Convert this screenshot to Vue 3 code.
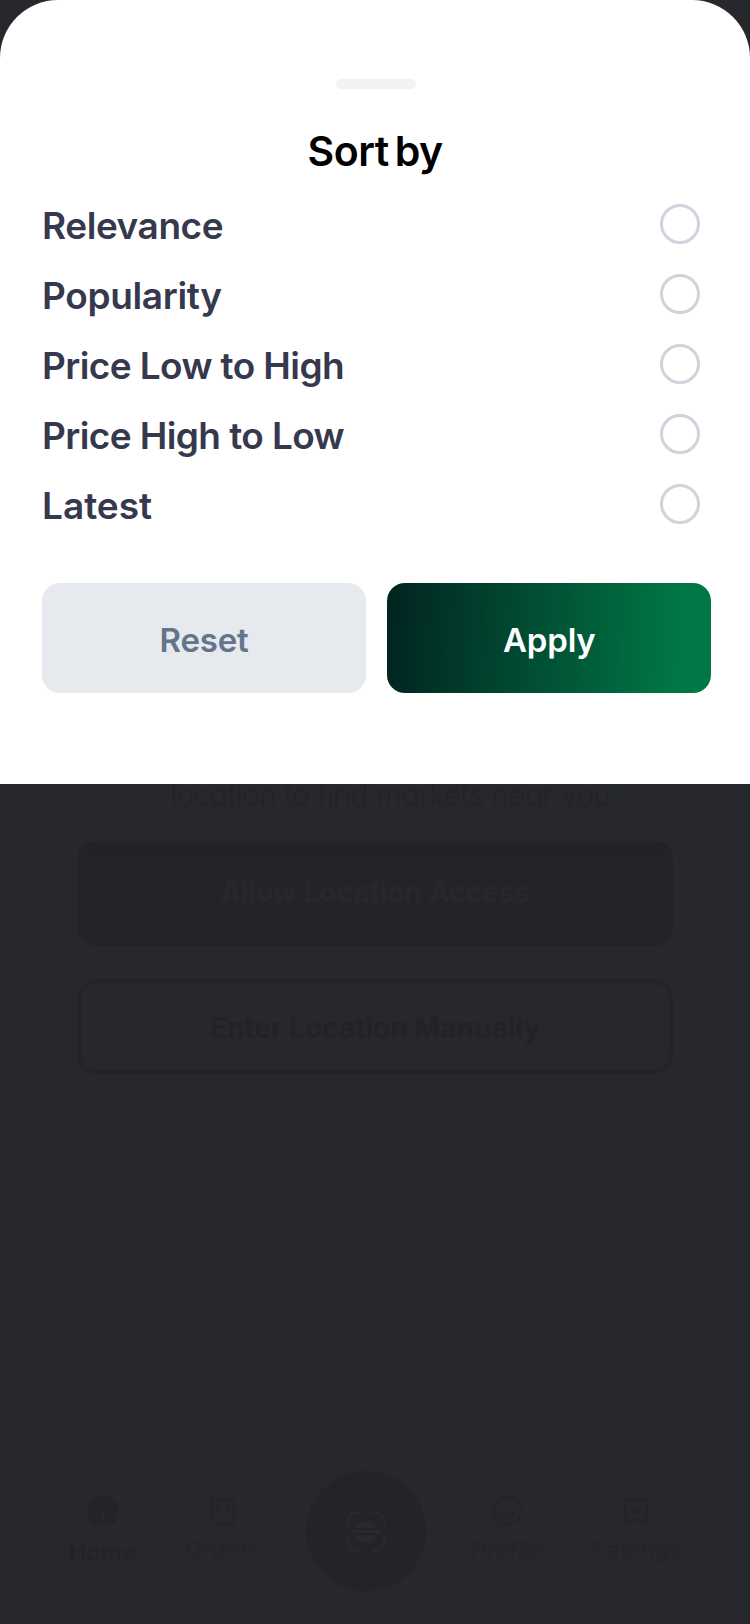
<script setup>
import { ref } from 'vue'

const options = [
  { label: 'Relevance', cls: 'relevance' },
  { label: 'Popularity', cls: 'popularity' },
  { label: 'Price Low to High', cls: 'low-high' },
  { label: 'Price High to Low', cls: 'high-low' },
  { label: 'Latest', cls: 'latest' },
]
const selected = ref(null)
</script>

<template>
  <div class="screen">
    <main class="page">
      <p class="hint">location to find markets near you</p>
      <button class="allow"><span>Allow Location Access</span></button>
      <button class="manual"><span>Enter Location Manually</span></button>
      <nav class="tabs">
        <div class="tab home">
          <svg width="32" height="32" viewBox="0 0 32 32">
            <path d="M13 2.2Q16 0 19 2.2L29.5 10Q32 12 31.5 15L29 27Q28 31 24 31H8Q4 31 3 27L.5 15Q0 12 2.500 10Z" fill="#242329" />
            <path d="M16 20v5" stroke="#292a2e" stroke-width="2.400" stroke-linecap="round" />
          </svg>
          <span>Home</span>
        </div>
        <div class="tab orders">
          <svg width="24" height="27" viewBox="0 0 24 27" fill="none" stroke="#242529" stroke-width="2.500">
            <path d="M1.250 1.250h21.500v24.500H1.250z" />
            <path d="M6 6v2.500a6 6 0 0 0 12 0V6" />
          </svg>
          <span>Orders</span>
        </div>
        <div class="scan">
          <svg width="40" height="41" viewBox="0 0 40 41" fill="none" stroke="#28282d" stroke-width="2.800" stroke-linecap="round">
            <path d="M1.500 15v-3.500a10 10 0 0 1 10-10H15M25 1.500h3.500a10 10 0 0 1 10 10V15M38.500 26v3.500a10 10 0 0 1-10 10H27M15 39.500h-3.500a10 10 0 0 1-10-10V26" />
            <path d="M6.500 20.500h27" />
            <path d="M10 17.200v-1q0-6 6-6h8q6 0 6 6v1zM10 24h20q0 7.200-6 7.200h-8q-6 0-6-7.200z" fill="#28282d" stroke="none" />
          </svg>
        </div>
        <div class="tab profile">
          <svg width="30" height="30" viewBox="0 0 30 30" fill="none" stroke="#242529" stroke-width="2.500">
            <circle cx="15" cy="15" r="13.700" />
            <path d="M8 15a7 7 0 0 0 14 0" stroke-linecap="round" />
          </svg>
          <span>Profile</span>
        </div>
        <div class="tab settings">
          <svg width="24" height="28" viewBox="0 0 24 28">
            <path d="M1.250 1.250h21.500V26L12 21.200 1.250 26z" fill="none" stroke="#242529" stroke-width="2.500" />
            <path d="M12 6l1.800 3.700 4.100.6-3 2.900.7 4.100-3.600-2-3.600 2 .7-4.100-3-2.900 4.100-.6z" fill="#242529" />
          </svg>
          <span>Settings</span>
        </div>
      </nav>
      <div class="indicator"></div>
    </main>

    <section class="sheet">
      <div class="handle"></div>
      <h1><span>Sort by</span></h1>
      <div class="options">
        <label v-for="o in options" :key="o.label" class="option" @click="selected = o.label">
          <span class="label" :class="o.cls">{{ o.label }}</span>
          <span class="radio"></span>
        </label>
      </div>
      <div class="actions">
        <button class="reset"><span>Reset</span></button>
        <button class="apply"><span>Apply</span></button>
      </div>
    </section>
  </div>
</template>

<style>
body { margin: 0; background: #27282c; }
</style>

<style scoped>
.screen {
  position: relative;
  width: 750px;
  height: 1624px;
  overflow: hidden;
  background: #27282c;
  font-family: Inter, "Liberation Sans", sans-serif;
}
* { box-sizing: border-box; }
button { font-family: inherit; border: 0; padding: 0; display: flex; justify-content: center; align-items: center; }

.sheet {
  position: absolute;
  top: 0;
  left: 0;
  width: 750px;
  height: 784px;
  padding: 79px 38px 0 42px;
  background: #fff;
  border-radius: 58px 58px 0 0;
}
.handle { width: 80px; height: 10px; margin-left: 294px; border-radius: 5px; background: #f2f2f2; }
h1 {
  margin: 35px 0 0;
  height: 54px;
  line-height: 54px;
  padding-left: 265.500px;
  font-size: 41px;
  font-weight: 600;
  letter-spacing: -.450px;
  word-spacing: -4px;
  color: #000;
  white-space: nowrap;
}
.options { margin-top: 11px; display: flex; flex-direction: column; }
.option { height: 70px; display: flex; justify-content: space-between; align-items: center; padding-right: 12px; }
.label { font-size: 37px; line-height: 46px; font-weight: 600; color: #36394d; letter-spacing: -.6px; padding-top: 4px; white-space: nowrap; }
.relevance { letter-spacing: -.45px; }
.popularity { letter-spacing: -.35px; }
.latest { letter-spacing: 0; }
.radio { width: 40px; height: 40px; border: 3px solid #d0d3db; border-radius: 50%; }
.actions { margin-top: 44px; display: flex; gap: 21.300px; }
.actions button { width: 324px; height: 110px; border-radius: 18px; font-size: 33px; font-weight: 600; letter-spacing: -.2px; padding-top: 4px; }
.reset { background: #e6e9ee; color: #64748b; }
.apply { background: linear-gradient(92deg, #012622 2%, #007745 90%); color: #fff; }

.page { height: 1624px; padding: 775px 0 0 77px; display: flex; flex-direction: column; border-bottom: 1px solid #25232a; }
.hint {
  margin: 0 0 0 93px;
  height: 40px;
  line-height: 40px;
  font-size: 30px;
  font-weight: 300;
  font-feature-settings: "cv11";
  letter-spacing: -.6px;
  color: #232428;
  white-space: nowrap;
}
.allow {
  width: 596px;
  height: 105px;
  margin-top: 26px;
  padding-bottom: 3px;
  border-radius: 18px;
  background: linear-gradient(180deg, #22222b 0, #22222a 15px, #232428 17px, #242328 32px, #242328 100%);
  color: #27282c;
  font-size: 28px;
  font-weight: 700;
}
.manual {
  width: 596px;
  height: 95px;
  margin-top: 33px;
  padding-top: 2px;
  border: 4px solid #242328;
  border-radius: 20px;
  background: transparent;
  color: #232227;
  font-size: 28px;
  font-weight: 700;
}
.tabs { margin: 397px 0 0 -17px; height: 120px; display: flex; }
.tab { display: flex; flex-direction: column; align-items: center; color: #242529; font-size: 24px; line-height: 30px; }
.home { width: 86px; padding-top: 22px; color: #242329; font-weight: 600; }
.home span { margin: 13px 0 0 -2px; letter-spacing: -.3px; }
.orders { width: 110px; margin-left: 22px; padding-top: 27px; }
.orders span { margin-top: 10px; }
.scan { width: 120px; height: 120px; margin-left: 27.500px; border-radius: 50%; background: #242328; display: flex; align-items: center; justify-content: center; }
.profile { width: 100px; margin-left: 31.500px; padding-top: 25px; }
.profile span { margin-top: 10px; letter-spacing: -.2px; }
.settings { width: 120px; margin-left: 19px; padding-top: 27px; }
.settings span { margin-top: 9px; }
.indicator { width: 268px; height: 9px; margin: 7px 0 0 163px; border-radius: 5px; background: #26272b; }
</style>
